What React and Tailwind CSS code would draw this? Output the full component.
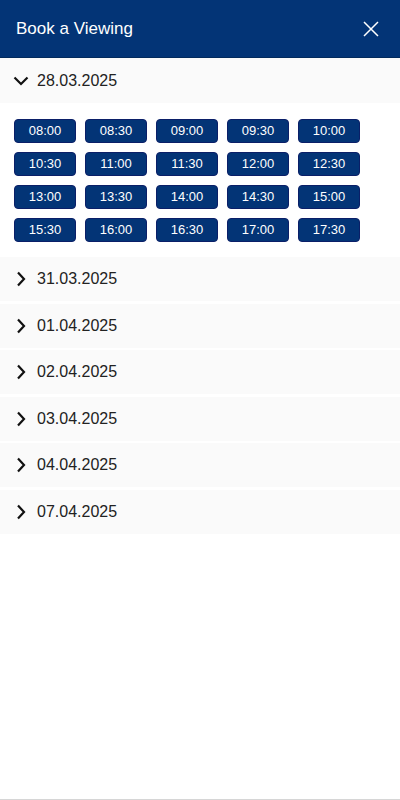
const times = [
  "08:00", "08:30", "09:00", "09:30", "10:00",
  "10:30", "11:00", "11:30", "12:00", "12:30",
  "13:00", "13:30", "14:00", "14:30", "15:00",
  "15:30", "16:00", "16:30", "17:00", "17:30",
];

const otherDates = ["31.03.2025", "01.04.2025", "02.04.2025", "03.04.2025", "04.04.2025", "07.04.2025"];

function ChevronDown() {
  return (
    <svg width="16" height="10" viewBox="0 0 16 10" fill="none" stroke="#111" strokeWidth="2.2">
      <path d="M1.5 1.5 L8 8 L14.5 1.5" />
    </svg>
  );
}

function ChevronRight() {
  return (
    <svg width="10" height="16" viewBox="0 0 10 16" fill="none" stroke="#111" strokeWidth="2.2">
      <path d="M2 1.5 L8 8 L2 14.5" />
    </svg>
  );
}

export default function App() {
  return (
    <div className="w-[400px] h-[800px] flex flex-col bg-white font-['Liberation_Sans',Arial,sans-serif] border-b border-[#d6d6d6]">
      {/* Header */}
      <div className="h-[58px] shrink-0 flex items-center justify-between pl-4 pr-[21px] bg-[#033476] border-b border-[#022a5c]">
        <span className="text-white text-[17px]">Book a Viewing</span>
        <svg width="16" height="16" viewBox="0 0 16 16" stroke="white" strokeWidth="1.5" fill="none">
          <path d="M1 1 L15 15 M15 1 L1 15" />
        </svg>
      </div>

      {/* Open day */}
      <div className="h-[45px] flex items-center bg-[#fafafa] pl-[13px]">
        <span className="w-6 flex"><ChevronDown /></span>
        <span className="text-[16px] text-[#222]">28.03.2025</span>
      </div>
      <div className="pt-4 pb-[15px] px-[14px] grid grid-cols-[repeat(5,62px)] gap-[9px]">
        {times.map((t) => (
          <button
            key={t}
            className="h-6 rounded-[4px] bg-[#033476] border border-[#0b1f68] text-white text-[13px] flex items-center justify-center"
          >
            {t}
          </button>
        ))}
      </div>

      {/* Collapsed days */}
      <div className="flex flex-col gap-[2.5px]">
        {otherDates.map((d) => (
          <div key={d} className="h-[44px] flex items-center bg-[#fafafa] pl-[16px]">
            <span className="w-[21px] flex"><ChevronRight /></span>
            <span className="text-[16px] text-[#222]">{d}</span>
          </div>
        ))}
      </div>
    </div>
  );
}
